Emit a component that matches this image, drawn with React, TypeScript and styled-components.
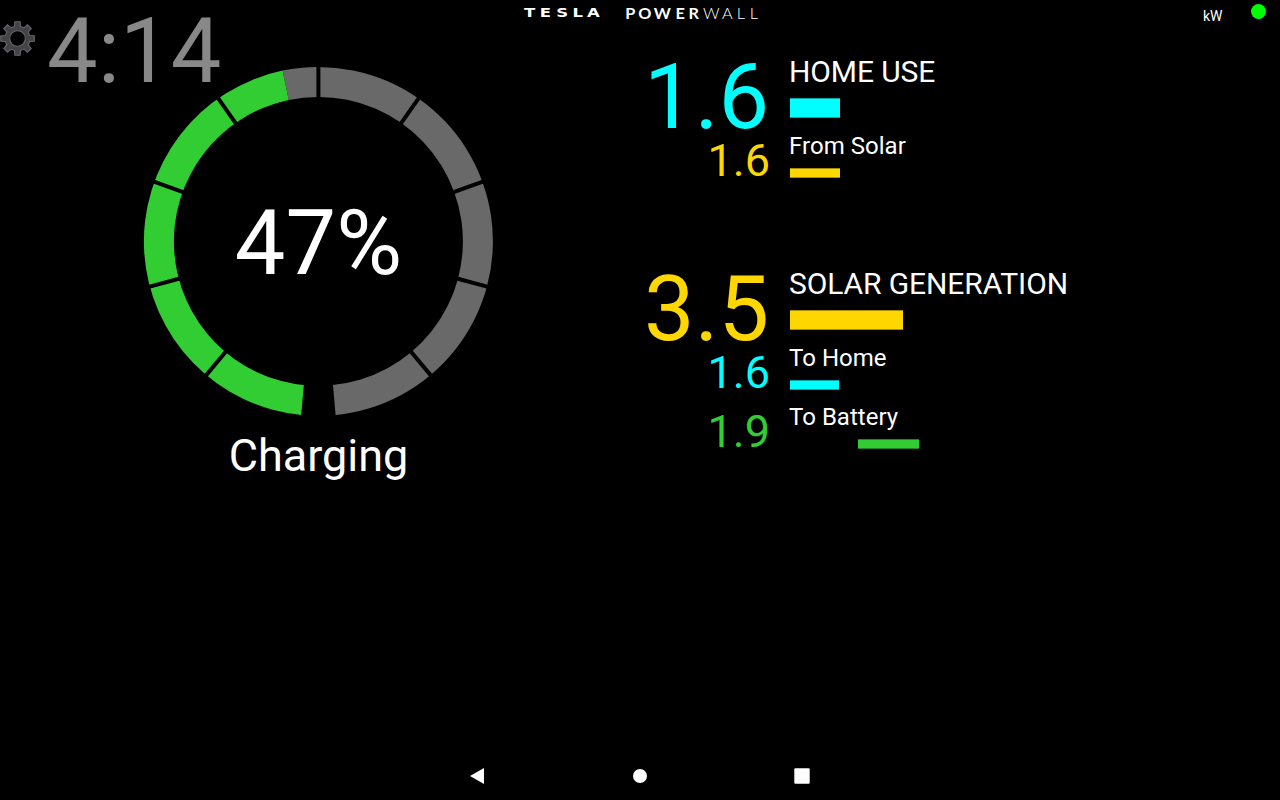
import React from "react";
import styled, { createGlobalStyle } from "styled-components";

const CYAN = "#00ffff";
const GOLD = "#ffd700";
const GREEN = "#32cd32";
const GRAY = "#696969";

const GlobalStyle = createGlobalStyle`
  body { margin: 0; background: #000; }
  * { box-sizing: border-box; }
`;

const Screen = styled.div`
  width: 1280px;
  height: 800px;
  display: flex;
  flex-direction: column;
  overflow: hidden;
  background: #000;
  color: #fff;
  font-family: Roboto, sans-serif;
`;

const Header = styled.header`
  flex: none;
  height: 56px;
  display: grid;
  grid-template-columns: 520px 1fr 520px;
  align-items: start;
`;

const ClockArea = styled.div`
  display: flex;
  align-items: flex-start;
  gap: 11px;
`;

const Gear = styled.svg`
  width: 36px;
  height: 36px;
  margin-top: 21px;
  display: block;
`;

const Clock = styled.div`
  margin-top: 7px;
  font-size: 90px;
  line-height: 90px;
  letter-spacing: 0.3px;
  color: #888;
`;

const Wordmark = styled.svg`
  width: 240px;
  height: 28px;
  display: block;
  fill: #fff;
`;

const Status = styled.div`
  display: flex;
  justify-content: flex-end;
  padding: 4px 14px 0 0;
  gap: 28.5px;
`;

const Unit = styled.span`
  margin-top: 4px;
  font-size: 14px;
  line-height: 16px;
`;

const Online = styled.span`
  width: 15px;
  height: 15px;
  border-radius: 50%;
  background: #00ff00;
`;

const Main = styled.main`
  flex: 1;
  display: grid;
  grid-template-columns: 637px 1fr;
`;

const BatteryPanel = styled.section`
  display: flex;
  flex-direction: column;
  align-items: center;
  padding-top: 10px;
`;

const Gauge = styled.div`
  display: grid;
  place-items: center;
  width: 351px;
  height: 351px;
  & > * { grid-area: 1 / 1; }
`;

const Ring = styled.svg`
  width: 351px;
  height: 351px;
  display: block;
`;

const Percent = styled.div`
  font-size: 90px;
  line-height: 106px;
  margin-top: 4px;
  letter-spacing: 0.2px;
`;

const State = styled.div`
  margin-top: 12px;
  font-size: 45px;
  line-height: 54px;
`;

const Flows = styled.section`
  display: flex;
  flex-direction: column;
  gap: 77px;
`;

const Group = styled.div`
  display: flex;
  flex-direction: column;
`;

const Row = styled.div<{ $main?: boolean }>`
  display: grid;
  grid-template-columns: 133px 1fr;
  column-gap: 19px;
  height: ${(p) => (p.$main ? 76 : 59)}px;
`;

const Value = styled.div<{ $main?: boolean; $color: string }>`
  justify-self: end;
  color: ${(p) => p.$color};
  font-size: ${(p) => (p.$main ? 90 : 45)}px;
  line-height: ${(p) => (p.$main ? 84 : 57)}px;
  margin-right: ${(p) => (p.$main ? 1 : 0)}px;
`;

const Label = styled.div<{ $main?: boolean }>`
  font-size: ${(p) => (p.$main ? 30 : 24)}px;
  line-height: ${(p) => (p.$main ? 32 : 28)}px;
  letter-spacing: ${(p) => (p.$main ? "-0.1px" : "0.03px")};
`;

const Bar = styled.div<{ $main?: boolean; $color: string; $width: number; $start?: number }>`
  width: ${(p) => p.$width}px;
  height: ${(p) => (p.$main ? 20 : 10)}px;
  margin: ${(p) => (p.$main ? 10 : 8)}px 0 0 ${(p) => 1 + (p.$start ?? 0)}px;
  background: ${(p) => p.$color};
  box-shadow: inset 0 1px rgba(0, 0, 0, 0.35), inset 0 -1px rgba(0, 0, 0, 0.35);
`;

const NavBar = styled.nav`
  flex: none;
  height: 48px;
  display: flex;
  justify-content: center;
  align-items: center;
  gap: 138px;
`;

const NavIcon = styled.svg`
  width: 24px;
  height: 24px;
  display: block;
  fill: #fff;
`;

interface FlowProps {
  main?: boolean;
  value: string;
  label: string;
  color: string;
  width: number;
  start?: number;
}

function Flow({ main, value, label, color, width, start }: FlowProps) {
  return (
    <Row $main={main}>
      <Value $main={main} $color={color}>{value}</Value>
      <div>
        <Label $main={main}>{label}</Label>
        <Bar $main={main} $color={color} $width={width} $start={start} />
      </div>
    </Row>
  );
}

const CX = 175.4;
const CY = 175.4;
const OUTER = 174.5;
const INNER = 144.5;

// Angles run clockwise from twelve o'clock.
function point(radius: number, deg: number) {
  const a = (deg * Math.PI) / 180;
  return `${CX + radius * Math.sin(a)} ${CY - radius * Math.cos(a)}`;
}

function arc(from: number, to: number) {
  const large = to - from > 180 ? 1 : 0;
  return `M${point(OUTER, from)} A${OUTER} ${OUTER} 0 ${large} 1 ${point(OUTER, to)} L${point(INNER, to)} A${INNER} ${INNER} 0 ${large} 0 ${point(INNER, from)}Z`;
}

const ticks = Array.from({ length: 11 }, (_, i) => 185 + i * 35);

function gearPath() {
  const c = 17.5;
  const parts: string[] = [];
  const at = (r: number, d: number) => {
    const a = (d * Math.PI) / 180;
    return `${c + r * Math.sin(a)} ${c - r * Math.cos(a)}`;
  };
  for (let i = 0; i < 8; i++) {
    const d = i * 45;
    parts.push(`${i ? "L" : "M"}${at(12.4, d - 14)} L${at(17, d - 9)} L${at(17, d + 9)} L${at(12.4, d + 14)}`);
    parts.push(`A12.4 12.4 0 0 1 ${at(12.4, d + 31)}`);
  }
  return parts.join(" ") + "Z M25.3 17.5a7.8 7.8 0 1 0-15.6 0a7.8 7.8 0 1 0 15.6 0Z";
}

export default function App() {
  return (
    <Screen>
      <GlobalStyle />
      <Header>
        <ClockArea>
          <Gear viewBox="0 0 36 36">
            <path d={gearPath()} fill="#444" fillRule="evenodd" stroke="#62646e" strokeWidth="1.1" />
          </Gear>
          <Clock>4:14</Clock>
        </ClockArea>
        <Wordmark viewBox="0 0 240 28">
          <g fontFamily="'DejaVu Sans', sans-serif" fontWeight="700" fontSize="12.5" transform="scale(1.32 1)">
            <text x="3 14.9 27.5 39.7 50.7" y="17.5">TESLA</text>
          </g>
          <g fontFamily="Lato, sans-serif" fontSize="14.8" transform="scale(1.1 1)">
            <text x="95.7 107.6 121.6 141.3 153.3" y="18.6" fontWeight="700">POWER</text>
            <text x="166.4 183.6 197 208.9" y="18.6" fontWeight="300">WALL</text>
          </g>
        </Wordmark>
        <Status>
          <Unit>kW</Unit>
          <Online />
        </Status>
      </Header>
      <Main>
        <BatteryPanel>
          <Gauge>
            <Ring viewBox="0 0 351 351">
              <path d={arc(348.15, 535)} fill={GRAY} />
              <path d={arc(185, 348.15)} fill={GREEN} />
              {ticks.map((deg) => (
                <path key={deg} d={`M${point(INNER - 2, deg)} L${point(OUTER + 2, deg)}`} stroke="#000" strokeWidth="4" />
              ))}
            </Ring>
            <Percent>47%</Percent>
          </Gauge>
          <State>Charging</State>
        </BatteryPanel>
        <Flows>
          <Group>
            <Flow main value="1.6" label="HOME USE" color={CYAN} width={50} />
            <Flow value="1.6" label="From Solar" color={GOLD} width={50} />
          </Group>
          <Group>
            <Flow main value="3.5" label="SOLAR GENERATION" color={GOLD} width={113} />
            <Flow value="1.6" label="To Home" color={CYAN} width={49} />
            <Flow value="1.9" label="To Battery" color={GREEN} width={61} start={68} />
          </Group>
        </Flows>
      </Main>
      <NavBar>
        <NavIcon viewBox="0 0 24 24"><path d="M18 4v16L4 12Z" /></NavIcon>
        <NavIcon viewBox="0 0 24 24"><circle cx="12" cy="12" r="7" /></NavIcon>
        <NavIcon viewBox="0 0 24 24"><rect x="4.3" y="4.2" width="15.4" height="15.6" rx="1" /></NavIcon>
      </NavBar>
    </Screen>
  );
}
